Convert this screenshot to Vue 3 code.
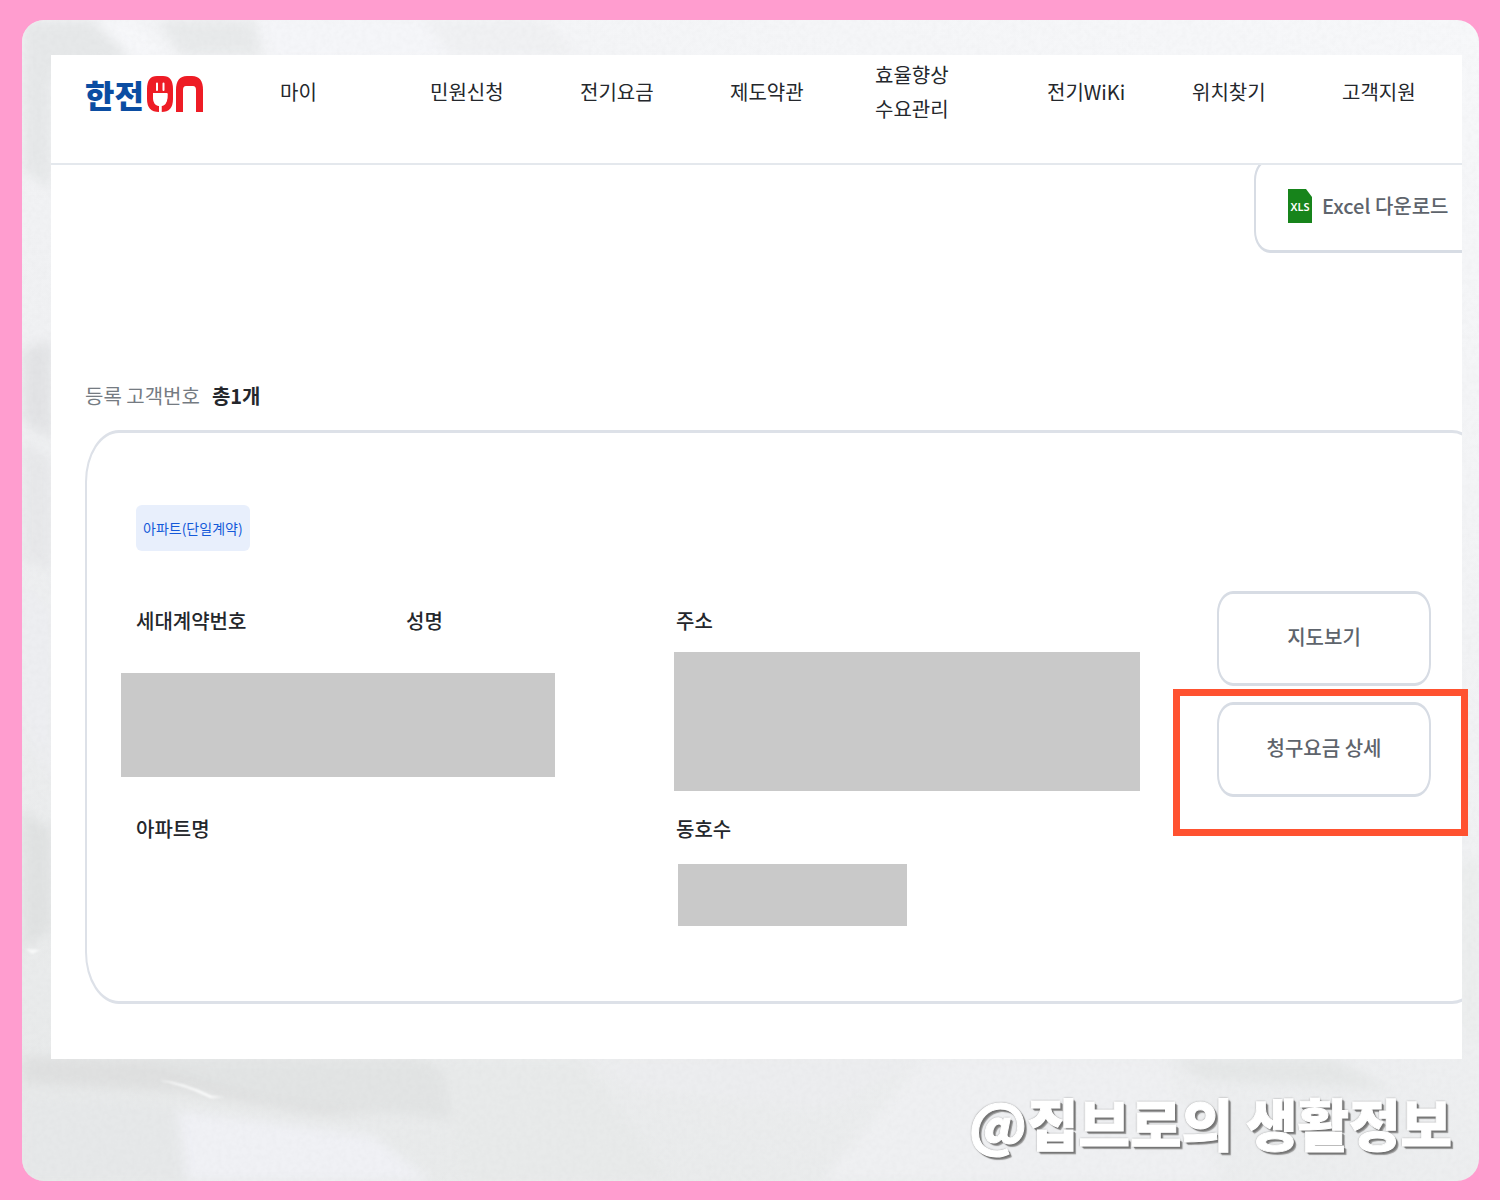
<script setup>
const menu = [
  ['마이'],
  ['민원신청'],
  ['전기요금'],
  ['제도약관'],
  ['효율향상', '수요관리'],
  ['전기WiKi'],
  ['위치찾기'],
  ['고객지원'],
]
</script>

<template>
  <div class="page">
    <main class="paper">
      <svg class="texture" viewBox="0 0 1457 1161" preserveAspectRatio="none" aria-hidden="true">
        <defs>
          <filter id="soft" x="-20%" y="-20%" width="140%" height="140%"><feGaussianBlur stdDeviation="6" /></filter>
          <filter id="fine"><feGaussianBlur stdDeviation="1" /></filter>
          <filter id="grain" x="0" y="0" width="100%" height="100%">
            <feTurbulence type="fractalNoise" baseFrequency="0.2" numOctaves="3" seed="4" />
            <feColorMatrix values="0 0 0 0 0.5  0 0 0 0 0.5  0 0 0 0 0.52  0.12 0 0 0 -0.04" />
          </filter>
        </defs>
        <g filter="url(#soft)">
          <path d="M0 0H70L110 36L30 60V170L0 150Z" fill="#e6e8e9" />
          <path d="M70 0H110L150 36H108Z" fill="#f7f8fa" />
          <path d="M135 0H232L240 36H160Z" fill="#e8eaeb" />
          <path d="M240 0H400L430 36H250Z" fill="#f5f6f9" />
          <path d="M400 0H520L560 36H430Z" fill="#f0f1f3" />
          <path d="M0 330L30 320V420L0 400Z" fill="#e2e3e5" />
          <path d="M0 420L30 440V550L0 540Z" fill="#e7e8ea" />
          <path d="M0 560L30 590V760L0 700Z" fill="#edeef1" />
          <path d="M0 790L30 810V910L0 930Z" fill="#e0e2e2" />
          <path d="M0 1036L220 1044L420 1090L300 1095L160 1072L0 1064Z" fill="#dfe0e0" />
          <path d="M120 1038H400L520 1110L250 1080Z" fill="#e2e4e4" />
          <path d="M0 1075L150 1085L200 1161H0Z" fill="#e6e8e9" />
          <path d="M155 1090L350 1116L410 1161H165Z" fill="#f0f1f5" />
          <path d="M420 1040H560L650 1161H440Z" fill="#e8eaea" />
          <path d="M560 1040H900L800 1090L620 1070Z" fill="#ecedef" />
          <path d="M900 1040H1140L1200 1161H800Z" fill="#eff0f2" />
          <path d="M1150 1038H1310L1370 1070L1180 1060Z" fill="#e5e7e7" />
          <path d="M1438 840H1457V1030L1438 1000Z" fill="#ebeded" />
        </g>
        <rect width="1457" height="1161" filter="url(#grain)" />
        <path d="M136 1060Q162 1062 190 1076L203 1077L188 1078Q165 1066 136 1060Z" fill="#fbfcfc" filter="url(#fine)" />
        <path d="M4 929L18 930L10 934Z" fill="#f8f9f9" filter="url(#fine)" />
      </svg>

      <div class="stage">
        <section class="sheet">
          <header class="top">
            <a class="logo" href="#" aria-label="한전ON">
              <span>한전</span>
              <svg width="57" height="38" viewBox="0 0 57 38" aria-hidden="true">
                <path d="M10 1H16Q26 1 26 14V24Q26 37 14.500 37V31Q20.500 29 20.500 19H6V19Q6 29 12 31V37Q0 37 0 24V14Q0 1 10 1Z" fill="#ee1c25" />
                <path d="M6 18H20.500V23Q20 30 14.500 31V37H12V31Q6 30 6 23Z" fill="#fff" />
                <path d="M10 8.500V15M16.500 8.500V15" stroke="#fff" stroke-width="2" stroke-linecap="round" />
                <path d="M29 37V15Q29 1 40 1H45Q56 1 56 15V37H49V15Q49 11 46 11H39Q36 11 36 15V37Z" fill="#ee1c25" />
              </svg>
            </a>
            <nav class="menu">
              <a v-for="item in menu" :key="item[0]" href="#">
                <span v-for="line in item" :key="line">{{ line }}</span>
              </a>
            </nav>
          </header>

          <div class="toolbar">
            <button type="button" class="btn excel">
              <svg width="24" height="34" viewBox="0 0 24 34" aria-hidden="true">
                <path d="M0 0H18L24 8V34H0Z" fill="#17841b" />
                <text x="12" y="22" text-anchor="middle">XLS</text>
              </svg>
              Excel 다운로드
            </button>
          </div>

          <h2 class="count">등록 고객번호 <strong>총1개</strong></h2>

          <article class="card">
            <span class="badge">아파트(단일계약)</span>
            <div class="body">
              <div class="details">
                <div>
                  <div class="pair">
                    <h3>세대계약번호</h3>
                    <h3>성명</h3>
                  </div>
                  <div class="mask mask-id"></div>
                </div>
                <div>
                  <h3>주소</h3>
                  <div class="mask mask-address"></div>
                </div>
                <h3>아파트명</h3>
                <div>
                  <h3>동호수</h3>
                  <div class="mask mask-unit"></div>
                </div>
              </div>
              <div class="actions">
                <button type="button" class="btn">지도보기</button>
                <button type="button" class="btn">청구요금 상세</button>
              </div>
            </div>
          </article>
        </section>
        <div class="highlight"></div>
      </div>

      <p class="signature">@집브로의 생활정보</p>
    </main>
  </div>
</template>

<style>
body {
  margin: 0;
}
</style>

<style scoped>
* {
  box-sizing: border-box;
}

.page {
  display: flex;
  min-height: 100vh;
  padding: 20px 21px 19px 22px;
  background: #ff9dcf;
  font-family: "Noto Sans CJK KR", "Noto Sans", sans-serif;
  font-size: 20px;
  line-height: 30px;
  color: #24272c;
}

.paper {
  position: relative;
  flex: 1;
  min-width: 0;
  padding: 35px 17px 0 29px;
  border-radius: 22px;
  overflow: hidden;
  background: linear-gradient(20deg, #e7e9e9, #f0f1f3 50%, #f7f8fa);
}

.texture {
  position: absolute;
  inset: 0;
  width: 100%;
  height: 100%;
}

.stage {
  position: relative;
}

.sheet {
  overflow: hidden;
  padding-bottom: 55px;
  background: #fff;
}

.top {
  position: relative;
  z-index: 1;
  display: flex;
  align-items: center;
  padding: 0 0 34px 34px;
  border-bottom: 2px solid #e4e8ed;
  background: #fff;
}

.logo {
  display: flex;
  flex: none;
  align-items: center;
  width: 195px;
  height: 74px;
  padding-top: 4px;
  gap: 3px;
  color: #0b4da2;
  font-size: 32px;
  font-weight: 900;
  text-decoration: none;
}

.menu {
  display: grid;
  flex: 1;
  grid-template-columns: 150fr 150fr 150fr 145fr 172fr 145fr 150fr 120fr;
  align-items: center;
}

.menu a {
  display: flex;
  flex-direction: column;
  color: inherit;
  line-height: 34px;
  text-decoration: none;
  white-space: nowrap;
}

.btn {
  height: 95px;
  padding: 0 0 3px;
  border: 2px solid #d7dce4;
  border-width: 3px 2px;
  border-radius: 16px / 22px;
  background: #fff;
  color: #5e646c;
  font: inherit;
  font-weight: 500;
}

.toolbar {
  display: flex;
  justify-content: flex-end;
  margin: -7px -20px 0 0;
}

.excel {
  display: flex;
  align-items: center;
  width: 228px;
  padding: 0 0 0 32px;
  gap: 10px;
  white-space: nowrap;
}

.excel text {
  fill: #fff;
  font: 600 11px "Noto Sans", sans-serif;
}

.count {
  display: flex;
  gap: 12px;
  margin: 128px 0 19px 34px;
  color: #757b82;
  font-size: 20px;
  font-weight: 400;
}

.count strong {
  color: #24272c;
  font-weight: 700;
}

.card {
  margin: 0 -24px 0 34px;
  padding: 72px 53px 75px 49px;
  border: 2px solid #dde1e8;
  border-width: 3px 2px;
  border-radius: 34px / 52px;
}

.badge {
  display: block;
  width: fit-content;
  padding: 0 7px;
  border-radius: 6px;
  background: #e8effc;
  color: #1459d9;
  font-size: 14px;
  line-height: 46px;
}

.body {
  display: flex;
  gap: 77px;
  margin-top: 40px;
}

.details {
  display: grid;
  flex: 1;
  grid-template-columns: 540fr 464fr;
  row-gap: 23px;
  padding-top: 15px;
}

h3 {
  margin: 0;
  font-size: 20px;
  font-weight: 500;
}

.pair {
  display: grid;
  grid-template-columns: 1fr 1fr;
}

.mask {
  background: #c9c9c9;
}

.mask-id {
  width: calc(80% + 2px);
  height: 104px;
  margin: 37px 0 0 -15px;
}

.mask-address {
  height: 139px;
  margin: 16px 0 0 -2px;
}

.mask-unit {
  width: calc(49% + 2px);
  height: 62px;
  margin: 20px 0 0 2px;
}

.actions {
  display: flex;
  flex: none;
  flex-direction: column;
  width: 214px;
  gap: 16px;
}

.highlight {
  position: absolute;
  top: 634px;
  right: -6px;
  width: 295px;
  height: 147px;
  border: 7px solid #ff5230;
  pointer-events: none;
}

.signature {
  position: relative;
  margin: 23px 10px 0 0;
  color: #fff;
  font-size: 56px;
  font-weight: 900;
  line-height: 80px;
  text-align: right;
  text-shadow: 0 0 2px #555, 2px 2px 1px #777, 3px 3px 1px #999;
  -webkit-text-stroke: 1px #fff;
}
</style>
